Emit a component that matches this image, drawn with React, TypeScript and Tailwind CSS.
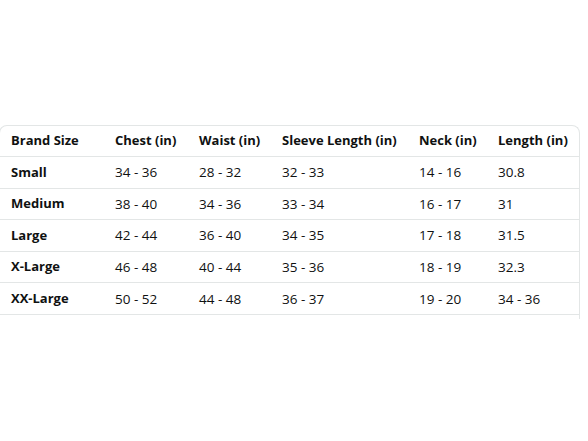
import React from "react";

const headers = ["Brand Size", "Chest (in)", "Waist (in)", "Sleeve Length (in)", "Neck (in)", "Length (in)"];
const rows = [
  ["Small", "34 - 36", "28 - 32", "32 - 33", "14 - 16", "30.8"],
  ["Medium", "38 - 40", "34 - 36", "33 - 34", "16 - 17", "31"],
  ["Large", "42 - 44", "36 - 40", "34 - 35", "17 - 18", "31.5"],
  ["X-Large", "46 - 48", "40 - 44", "35 - 36", "18 - 19", "32.3"],
  ["XX-Large", "50 - 52", "44 - 48", "36 - 37", "19 - 20", "34 - 36"],
];

const cols = "grid grid-cols-[104px_84px_83px_137px_79px_92px]";

export default function App() {
  return (
    <div className="h-[441px] w-[588px] overflow-hidden bg-white pt-[125px] text-[#0f1111] [font-family:'Open_Sans',Arial,sans-serif]">
      <div className="ml-[-1px] w-[581px] rounded-t-[8px] border-x border-t border-[#e3e6e6] pb-[4px]">
        <div className={`${cols} h-[31px] items-center border-b border-[#e3e6e6] text-[13px] font-bold`}>
          {headers.map((h) => (
            <div key={h} className="pl-[11px] whitespace-nowrap">{h}</div>
          ))}
        </div>
        {rows.map((r) => (
          <div key={r[0]} className={`${cols} h-[31.6px] items-center border-b border-[#e3e6e6] text-[13.5px]`}>
            {r.map((c, i) => (
              <div key={i} className={`pl-[11px] whitespace-nowrap ${i === 0 ? "font-bold text-[13px]" : ""}`}>{c}</div>
            ))}
          </div>
        ))}
      </div>
    </div>
  );
}
